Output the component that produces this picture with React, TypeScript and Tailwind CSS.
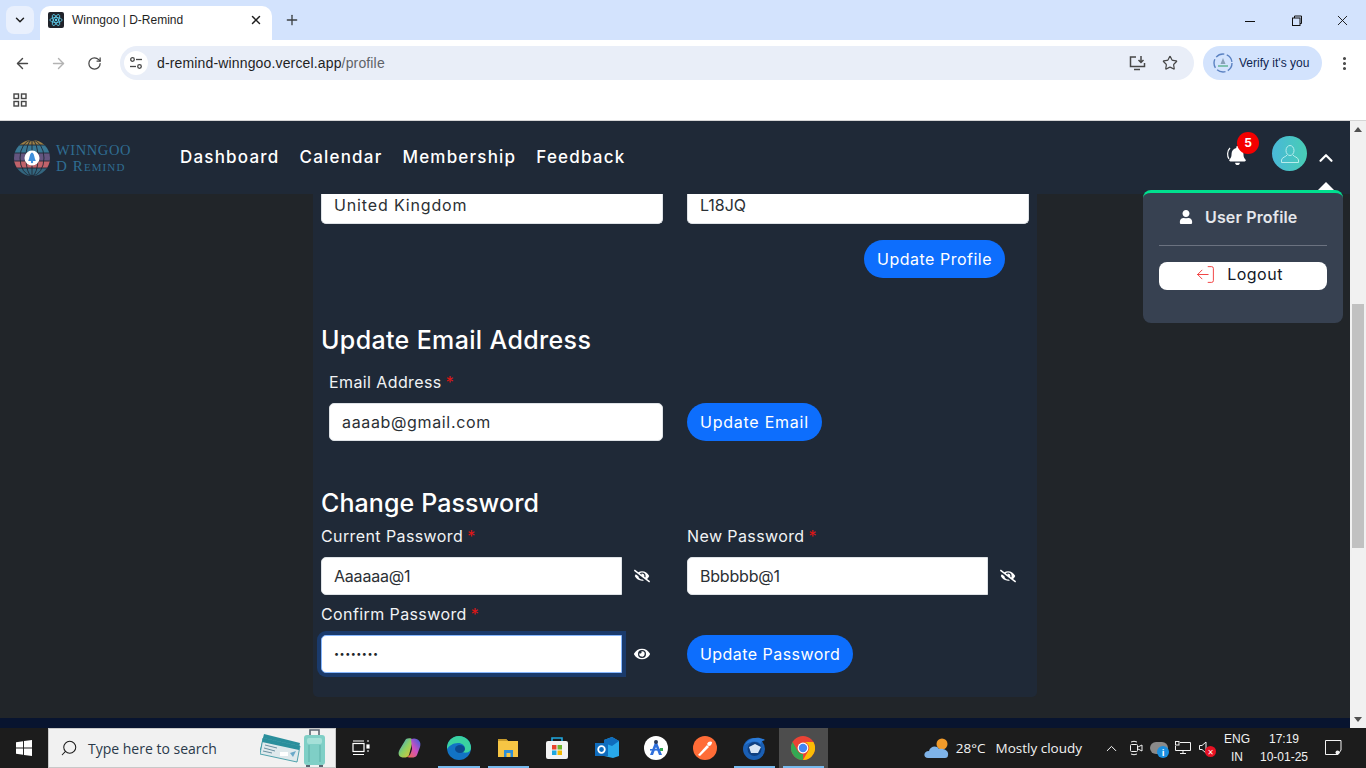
import { ArrowLeft, ArrowRight, ChevronDown, ChevronUp, LogOut, MoreVertical, Plus, RotateCw, Search, Star, X } from "lucide-react";
import type { ReactNode } from "react";
import { FaBell, FaEye, FaEyeSlash, FaUser } from "react-icons/fa";

const MONT = "font-['Inter','Open_Sans',sans-serif]";

function Req() {
  return <span className="ml-1 text-[#e01515]">*</span>;
}

function FieldLabel({ text, className = "" }: { text: string; className?: string }) {
  return (
    <div className={`text-[16px] leading-[20px] tracking-[0.4px] text-[#f1f3f5] ${className}`}>
      {text}
      <Req />
    </div>
  );
}

function TextBox({ value, className = "" }: { value: string; className?: string }) {
  return (
    <div className={`flex items-center rounded-[5px] border border-[#dee2e6] bg-white px-3 text-[16px] text-[#2b3035] ${className}`}>
      {value}
    </div>
  );
}

function BlueButton({ text, className = "" }: { text: string; className?: string }) {
  return (
    <div className={`flex h-[38px] items-center rounded-full bg-[#0d6efd] px-[13px] text-[16px] text-white ${className}`}>{text}</div>
  );
}

function PasswordField({ value, hidden }: { value: string; hidden: boolean }) {
  return (
    <div className="flex items-center">
      <div className="flex h-[38px] w-[301px] items-center rounded-l-[5px] border border-[#dee2e6] bg-white px-3 text-[16px] tracking-[-0.2px] text-[#2b3035]">
        {value}
      </div>
      <span className="ml-[12px] text-white">
        {hidden ? <FaEyeSlash size={16} /> : <FaEye size={16} />}
      </span>
    </div>
  );
}

function LogoGlobe() {
  return (
    <svg width="36" height="36" viewBox="0 0 36 36">
      <defs>
        <clipPath id="globeClip">
          <circle cx="18" cy="18" r="18" />
        </clipPath>
      </defs>
      <g clipPath="url(#globeClip)">
        <rect width="36" height="5" fill="#9c7f45" />
        <rect y="5" width="36" height="8" fill="#3a7894" />
        <rect y="13" width="36" height="8" fill="#64557f" />
        <rect y="21" width="36" height="7" fill="#c0636b" />
        <rect y="28" width="36" height="8" fill="#33667f" />
        <g fill="none" stroke="#1f2937" strokeWidth="0.9">
          <path d="M0 5 H36 M0 13 H36 M0 21 H36 M0 28 H36" />
          <ellipse cx="18" cy="18" rx="6" ry="18" />
          <ellipse cx="18" cy="18" rx="12" ry="18" />
          <path d="M18 0 V36" />
        </g>
      </g>
      <circle cx="18" cy="18" r="7.5" fill="#ffffff" />
      <path d="M18 12.5 C15.5 13.5 16 17 14.2 21 L21.8 21 C20 17 20.5 13.5 18 12.5 Z" fill="#3f8fdc" />
      <circle cx="18" cy="22" r="1.2" fill="#3f8fdc" />
    </svg>
  );
}

function ReactFavicon() {
  return (
    <div className="flex h-4 w-4 items-center justify-center rounded-[2px] bg-[#20232a]">
      <svg width="14" height="14" viewBox="-12 -12 24 24" fill="none" stroke="#61dafb" strokeWidth="1.3">
        <circle r="2" fill="#61dafb" stroke="none" />
        <ellipse rx="10.5" ry="4.2" />
        <ellipse rx="10.5" ry="4.2" transform="rotate(60)" />
        <ellipse rx="10.5" ry="4.2" transform="rotate(120)" />
      </svg>
    </div>
  );
}

function BrowserChrome() {
  return (
    <div className="h-[121px] shrink-0 border-b border-[#d5d5d5] bg-white font-['Open_Sans',sans-serif]">
      <div className="flex h-[40px] items-start bg-[#d3e3fd]">
        <div className="ml-[6px] mt-[6px] flex h-[28px] w-[28px] items-center justify-center rounded-[8px] bg-[#e9f0fd]">
          <ChevronDown size={14} strokeWidth={2.5} className="text-[#1f1f1f]" />
        </div>
        <div className="ml-[6px] mt-[6px] flex h-[34px] w-[232px] items-center rounded-t-[10px] bg-white pb-[6px] pl-[8px] pr-[9px]">
          <ReactFavicon />
          <span className="ml-2 font-['Liberation_Sans',sans-serif] text-[12px] text-[#1f1f1f]">Winngoo | D-Remind</span>
          <X size={14} strokeWidth={2.5} className="ml-auto text-[#1f1f1f]" />
        </div>
        <Plus size={16} strokeWidth={2} className="ml-[12px] mt-[12px] text-[#3c4043]" />
        <div className="ml-auto flex items-center pt-[12px] text-[#111111]">
          <svg width="10" height="16" viewBox="0 0 10 16" stroke="currentColor" strokeWidth="1">
            <path d="M0 8.5 H10" />
          </svg>
          <svg width="12" height="12" viewBox="0 0 12 12" fill="none" stroke="currentColor" className="ml-[36px]">
            <rect x="1.5" y="3" width="7.5" height="7.5" />
            <path d="M3.5 3 V1 H10.5 V8.5 H9" />
          </svg>
          <X size={17} strokeWidth={1.3} className="ml-[31px] mr-[15px]" />
        </div>
      </div>
      <div className="flex h-[46px] items-center">
        <ArrowLeft size={17} strokeWidth={2} className="ml-[14px] text-[#474747]" />
        <ArrowRight size={17} strokeWidth={2} className="ml-[19px] text-[#b3b3b3]" />
        <RotateCw size={15} strokeWidth={2} className="ml-[20px] text-[#474747]" />
        <div className="ml-[18px] flex h-[34px] w-[1074px] items-center rounded-full bg-[#e9eef8] pl-[4px]">
          <div className="flex h-[24px] w-[24px] items-center justify-center rounded-full bg-white">
            <svg width="14" height="14" viewBox="0 0 14 14" fill="none" stroke="#474747" strokeWidth="1.3">
              <circle cx="3.5" cy="3.5" r="1.8" />
              <path d="M7 3.5 H13" />
              <circle cx="10.5" cy="10.5" r="1.8" />
              <path d="M1 10.5 H7" />
            </svg>
          </div>
          <span className="ml-[9px] font-['Liberation_Sans',sans-serif] text-[14px] tracking-[0.15px] text-[#1f1f1f]">
            d-remind-winngoo.vercel.app<span className="text-[#5f6368]">/profile</span>
          </span>
          <svg width="17" height="16" viewBox="0 0 17 16" fill="none" stroke="#474747" strokeWidth="1.5" className="ml-auto">
            <path d="M7 2 H1.5 V11.5 H15.5 V8" />
            <path d="M5 14.5 H11" />
            <path d="M12 1 V7 M9.5 5 L12 7.5 L14.5 5" />
          </svg>
          <Star size={16} strokeWidth={1.8} className="ml-[16px] mr-[16px] text-[#474747]" />
        </div>
        <div className="ml-[9px] flex h-[34px] w-[119px] items-center rounded-full bg-[#d3e3fd] pl-[10px]">
          <svg width="20" height="20" viewBox="0 0 20 20" fill="none">
            <circle cx="10" cy="10" r="9" stroke="#5b82c2" strokeWidth="1.4" strokeDasharray="9 2.5" />
            <path d="M10 5 L12.5 11 H7.5 Z" fill="#8aa0b8" />
            <rect x="5" y="12" width="10" height="2" fill="#7fc0b0" />
          </svg>
          <span className="ml-[6px] font-['Liberation_Sans',sans-serif] text-[12px] text-[#0f2550]">Verify it's you</span>
        </div>
        <MoreVertical size={17} strokeWidth={2.4} className="ml-[14px] text-[#474747]" />
      </div>
      <div className="flex h-[34px] items-start pl-[13px] pt-[7px]">
        <svg width="14" height="14" viewBox="0 0 14 14" fill="none" stroke="#474747" strokeWidth="1.4">
          <rect x="1" y="1" width="4.5" height="4.5" />
          <rect x="8.5" y="1" width="4.5" height="4.5" />
          <rect x="1" y="8.5" width="4.5" height="4.5" />
          <rect x="8.5" y="8.5" width="4.5" height="4.5" />
        </svg>
      </div>
    </div>
  );
}

function NavBar() {
  return (
    <div className="flex h-[73px] shrink-0 items-center bg-[#1f2937]">
      <div className="ml-[14px] flex items-center">
        <LogoGlobe />
        <div className="ml-[6px] w-[76px] font-['Liberation_Serif',serif] text-[#2f6d92]">
          <div className="text-[14.5px] leading-[16px] tracking-[0.6px]">WINNGOO</div>
          <div className="text-[15px] leading-[16px] tracking-[1.1px] [font-variant:small-caps]">D Remind</div>
        </div>
      </div>
      <div className="ml-[48px] flex gap-[20px] text-[17px] font-medium tracking-[1.2px] text-white">
        <span>Dashboard</span>
        <span>Calendar</span>
        <span>Membership</span>
        <span>Feedback</span>
      </div>
      <div className="relative ml-auto flex items-center pr-[13px]">
        <div className="relative mb-[4px] mr-[25px]">
          <FaBell size={19} className="text-white" />
          <svg width="6" height="14" viewBox="0 0 6 14" fill="none" stroke="#ffffff" strokeWidth="1.2" className="absolute -left-[2px] top-[1px]">
            <path d="M4 1 C1 4 1 9 3 12" />
          </svg>
          <span className="absolute -right-[12px] -top-[14px] flex h-[22px] w-[22px] items-center justify-center rounded-full bg-[#f50000] text-[12px] font-bold text-white">
            5
          </span>
        </div>
        <div className="mb-[8px] flex h-[35px] w-[35px] items-center justify-center rounded-full bg-gradient-to-r from-[#4ab8d8] to-[#48cdb4]">
          <svg width="20" height="20" viewBox="0 0 20 20" fill="none" stroke="#b8ecec" strokeWidth="1">
            <ellipse cx="10" cy="6.5" rx="4" ry="5" />
            <path d="M7 11 C6 13 2 13 1.5 16 V18.5 H18.5 V16 C18 13 14 13 13 11" />
          </svg>
        </div>
        <ChevronUp size={22} strokeWidth={2.4} className="ml-[8px] text-white" />
      </div>
    </div>
  );
}

function UserMenu() {
  return (
    <div className="absolute left-[1143px] top-[69px] h-[133px] w-[200px] rounded-[8px] border-t-[3px] border-[#00e08f] bg-[#374151]">
      <div className="absolute -top-[11px] left-[175px] h-0 w-0 border-x-[8px] border-b-[8px] border-x-transparent border-b-white" />
      <div className="flex h-[48px] items-center pl-[36px] text-[#e5e7eb]">
        <FaUser size={14} className="text-white" />
        <span className="ml-[12px] text-[16px] font-semibold tracking-[0.15px]">User Profile</span>
      </div>
      <div className="mx-[16px] mt-[4px] border-t border-[#6b7280]" />
      <div className="mx-[16px] mt-[16px] flex h-[28px] items-center justify-center rounded-[8px] bg-white pb-[4px] pr-[8px] text-[#111827]">
        <LogOut size={21} strokeWidth={1} className="rotate-180 text-[#ef2b2b]" />
        <span className="ml-[11px] text-[16px] tracking-[0.5px]">Logout</span>
      </div>
    </div>
  );
}

function ProfileCard() {
  return (
    <div className="ml-[313px] h-[503px] w-[724px] rounded-b-[5px] bg-[#1f2937] pl-[8px] text-[#f1f3f5]">
      <div className="flex gap-[24px]">
        <TextBox value="United Kingdom" className="h-[30px] w-[342px] rounded-t-none border-t-0 pb-[8px] tracking-[0.85px]" />
        <TextBox value="L18JQ" className="h-[30px] w-[342px] rounded-t-none border-t-0 pb-[8px]" />
      </div>
      <div className="mt-[16px] flex justify-end pr-[32px]">
        <BlueButton text="Update Profile" className="tracking-[0.5px]" />
      </div>
      <h2 className="mt-[45px] text-[25px] font-medium leading-[34px] tracking-[0.35px] text-white">Update Email Address</h2>
      <div className="ml-[8px] mt-[15px]">
        <FieldLabel text="Email Address" />
        <div className="mt-[11px] flex items-center gap-[24px]">
          <TextBox value="aaaab@gmail.com" className="h-[38px] w-[334px] tracking-[0.65px]" />
          <BlueButton text="Update Email" className="tracking-[0.75px]" />
        </div>
      </div>
      <h2 className="mt-[45px] text-[25px] font-medium leading-[34px] tracking-[0.1px] text-white">Change Password</h2>
      <div className="mt-[6px] flex gap-[65px]">
        <div className="w-[301px] shrink-0">
          <FieldLabel text="Current Password" />
        </div>
        <FieldLabel text="New Password" />
      </div>
      <div className="mt-[11px] flex gap-[37px]">
        <PasswordField value="Aaaaaa@1" hidden />
        <PasswordField value="Bbbbbb@1" hidden />
      </div>
      <FieldLabel text="Confirm Password" className="mt-[9px]" />
      <div className="mt-[11px] flex items-center gap-[37px]">
        <div className="flex items-center">
          <div className="flex h-[38px] w-[301px] items-center rounded-l-[5px] border border-[#86b7fe] bg-white px-3 text-[9px] tracking-[0.5px] text-[#212529] shadow-[0_0_0_4px_#1a3a6b]">
            ••••••••
          </div>
          <span className="ml-[12px] text-white">
            <FaEye size={16} />
          </span>
        </div>
        <BlueButton text="Update Password" className="tracking-[0.45px]" />
      </div>
    </div>
  );
}

function Scrollbar() {
  return (
    <div className="flex w-[16px] shrink-0 flex-col bg-[#f1f1f1]">
      <div className="flex h-[17px] items-center justify-center">
        <div className="h-0 w-0 border-x-[4px] border-b-[5px] border-x-transparent border-b-[#505050]" />
      </div>
      <div className="ml-[2px] mt-[166px] h-[244px] w-[12px] bg-[#c1c1c1]" />
      <div className="mt-auto flex h-[17px] items-center justify-center">
        <div className="h-0 w-0 border-x-[4px] border-t-[5px] border-x-transparent border-t-[#505050]" />
      </div>
    </div>
  );
}

function AppIcon({ children, active = false, underline = false }: { children: ReactNode; active?: boolean; underline?: boolean }) {
  return (
    <div className={`relative flex h-[40px] w-[49.2px] items-center justify-center ${active ? "bg-[#4d4d4d]" : ""}`}>
      {children}
      {underline && <div className="absolute bottom-0 left-[4px] right-[4px] h-[2px] bg-[#76b9ed]" />}
    </div>
  );
}

function Taskbar() {
  return (
    <div className="flex h-[40px] shrink-0 items-center bg-[#1c1c1c] font-['Open_Sans',sans-serif] text-white">
      <div className="flex w-[48px] justify-center">
        <svg width="16" height="16" viewBox="0 0 17 17" fill="#ffffff">
          <path d="M0 2.5 L7.5 1.3 V8 H0 Z" />
          <path d="M8.5 1.1 L17 0 V8 H8.5 Z" />
          <path d="M0 9 H7.5 V15.7 L0 14.5 Z" />
          <path d="M8.5 9 H17 V17 L8.5 15.9 Z" />
        </svg>
      </div>
      <div className="flex h-[40px] w-[288px] items-center border border-[#c8c8c8] bg-[#f1f1f1] pl-[11px] pr-[9px]">
        <Search size={18} strokeWidth={1.4} className="-scale-x-100 text-[#1c1c1c]" />
        <span className="ml-[10px] text-[14px] text-[#2a3a4a]">Type here to search</span>
        <svg width="66" height="38" viewBox="0 0 66 38" className="ml-auto">
          <path d="M4 5 L40 14 L36 30 L0 21 Z" fill="#2a8f9c" />
          <path d="M3 9 L40 17 L37 33 L0 25 Z" fill="#dfe9ec" stroke="#2a8f9c" strokeWidth="0.8" />
          <path d="M3 9 L40 17 L39 21 L2 13 Z" fill="#2a8f9c" />
          <path d="M5 16 L17 19 M4 19 L15 22 M3 22 L12 24" stroke="#6a8fa0" strokeWidth="1" />
          <rect x="20" y="23" width="8" height="4" fill="#ffffff" />
          <path d="M30 24 L36 22 L33 28 Z" fill="#6aa8c8" />
          <path d="M50 6 V1 H59 V6" fill="none" stroke="#5b6470" strokeWidth="1.6" />
          <rect x="44" y="6" width="21" height="30" rx="3" fill="#7fcfc6" />
          <rect x="47" y="9" width="15" height="6" rx="2" fill="#a5e0d8" />
          <path d="M49 16 V33 M60 16 V33" stroke="#5fb0a8" strokeWidth="1" />
          <rect x="46" y="36" width="4" height="2" fill="#5b6470" />
          <rect x="59" y="36" width="4" height="2" fill="#5b6470" />
        </svg>
      </div>
      <div className="flex items-center">
        <AppIcon>
          <svg width="18" height="16" viewBox="0 0 18 16" fill="none" stroke="#ffffff" strokeWidth="1.2">
            <rect x="1" y="3.5" width="11" height="8" />
            <path d="M1 1 H12 M1 14.5 H12" />
            <rect x="15" y="5" width="2" height="3" fill="#ffffff" />
            <path d="M15 1 H17 M15 11 H17" />
          </svg>
        </AppIcon>
        <AppIcon>
          <svg width="24" height="24" viewBox="0 0 24 24">
            <defs>
              <linearGradient id="cop" x1="0" y1="0" x2="1" y2="1">
                <stop offset="0" stopColor="#2f9be8" />
                <stop offset="0.5" stopColor="#8ed060" />
                <stop offset="1" stopColor="#f0c030" />
              </linearGradient>
              <linearGradient id="cop2" x1="1" y1="0" x2="0" y2="1">
                <stop offset="0" stopColor="#3060e0" />
                <stop offset="0.5" stopColor="#d050c0" />
                <stop offset="1" stopColor="#f07040" />
              </linearGradient>
            </defs>
            <path d="M8 3 C10 2 14 2 15 4 L11 19 C10 22 5 22 3 21 C0 20 0 16 2 13 Z" fill="url(#cop)" />
            <path d="M13 3 C19 1 24 5 22 11 L19 19 C18 22 13 22 9 21 C12 20 13 17 14 13 Z" fill="url(#cop2)" />
          </svg>
        </AppIcon>
        <AppIcon underline>
          <svg width="24" height="24" viewBox="0 0 24 24">
            <circle cx="12" cy="12" r="12" fill="#1273c4" />
            <path d="M12 0 A12 12 0 0 1 24 12 C24 17 17 18 14 15 C20 14 18 7 11 7 C6 7 2 10 0 13 A12 12 0 0 1 12 0 Z" fill="#3ad2a0" />
            <ellipse cx="13" cy="13" rx="5" ry="4" fill="#0b4a8f" />
          </svg>
        </AppIcon>
        <AppIcon underline>
          <svg width="22" height="20" viewBox="0 0 22 20">
            <path d="M1 1 H9 L11 3 H21 V19 H1 Z" fill="#f6c544" />
            <path d="M1 1 H9 L11 3 H1 Z" fill="#c79a2a" />
            <rect x="7" y="12" width="9" height="7" fill="#2d8fd8" />
            <rect x="9.5" y="15" width="4" height="4" fill="#f6c544" />
          </svg>
        </AppIcon>
        <AppIcon>
          <svg width="24" height="24" viewBox="0 0 24 24">
            <path d="M7 6 V2 H17 V6" fill="none" stroke="#1fa8e0" strokeWidth="1.6" />
            <rect x="1" y="5" width="22" height="18" rx="2" fill="#f3f3f3" />
            <rect x="7" y="9" width="4.5" height="4.5" fill="#e8452c" />
            <rect x="12.5" y="9" width="4.5" height="4.5" fill="#6db52d" />
            <rect x="7" y="14.5" width="4.5" height="4.5" fill="#1fa8e0" />
            <rect x="12.5" y="14.5" width="4.5" height="4.5" fill="#f6b900" />
          </svg>
        </AppIcon>
        <AppIcon>
          <svg width="24" height="24" viewBox="0 0 24 24">
            <path d="M9 4 L17 1 L24 5 V20 L18 22 L9 20 Z" fill="#28a8ea" />
            <path d="M9 4 L17 1 L24 5 L17 10 L9 7 Z" fill="#0f6cbd" />
            <rect x="0" y="7" width="13" height="13" fill="#0f6cbd" />
            <circle cx="6.5" cy="13.5" r="3.3" fill="none" stroke="#ffffff" strokeWidth="1.8" />
          </svg>
        </AppIcon>
        <AppIcon>
          <svg width="24" height="24" viewBox="0 0 24 24">
            <circle cx="12" cy="12" r="12" fill="#ffffff" />
            <path d="M12 4 L18 19 H15 L12 11 L9 19 H6 Z" fill="#2f6fdc" />
            <circle cx="12" cy="6" r="2" fill="#2a3a5a" />
            <rect x="6" y="13" width="12" height="1.6" fill="#2f6fdc" />
            <rect x="16" y="12" width="3" height="3" fill="#34a853" />
          </svg>
        </AppIcon>
        <AppIcon>
          <svg width="24" height="24" viewBox="0 0 24 24">
            <circle cx="12" cy="12" r="12" fill="#ff6c37" />
            <path d="M5 19 L14 9 L16 11 L7 20 Z" fill="#ffffff" />
            <path d="M14 8 C15 5 18 5 19 6 C19 8 18 10 15.5 10 Z" fill="#ffffff" />
          </svg>
        </AppIcon>
        <AppIcon underline>
          <svg width="24" height="24" viewBox="0 0 24 24">
            <circle cx="12" cy="13" r="11" fill="#1a5fb4" />
            <path d="M3 9 C5 3 15 -1 23 4 C20 5 19 6 19 8 C15 4 8 5 3 9 Z" fill="#2a7ad8" />
            <circle cx="12.5" cy="13" r="7" fill="#0f3f80" />
            <path d="M7 11 L13 8 L19 11 L16 17 L9 17 Z" fill="#d6e4f5" />
          </svg>
        </AppIcon>
        <AppIcon active underline>
          <svg width="24" height="24" viewBox="0 0 24 24">
            <circle cx="12" cy="12" r="12" fill="#ea4335" />
            <path d="M12 24 A12 12 0 0 1 1.6 6 L7 15.5 A6 6 0 0 0 12 18 Z" fill="#34a853" />
            <path d="M12 24 A12 12 0 0 0 22.4 6 H12 A6 6 0 0 1 17 15.5 Z" fill="#fbbc05" />
            <circle cx="12" cy="12" r="5.4" fill="#ffffff" />
            <circle cx="12" cy="12" r="4.2" fill="#4285f4" />
          </svg>
        </AppIcon>
      </div>
      <div className="ml-auto flex items-center">
        <svg width="26" height="22" viewBox="0 0 26 22">
          <circle cx="18" cy="7" r="5.5" fill="#f09a2a" />
          <path d="M4 21 C-1 21 -1 14 5 14 C6 9 13 8 15 12 C20 11 25 14 24 18 C24 20 23 21 21 21 Z" fill="#7fb3e8" />
        </svg>
        <span className="ml-[6px] text-[13.5px] text-[#f2f2f2]">28°C</span>
        <span className="ml-[10px] text-[13.5px] text-[#f2f2f2]">Mostly cloudy</span>
        <ChevronUp size={17} strokeWidth={1.4} className="ml-[21px]" />
        <svg width="14" height="16" viewBox="0 0 14 16" fill="none" stroke="#f2f2f2" className="ml-[9px]">
          <rect x="1.5" y="4.5" width="7" height="7" rx="1" />
          <path d="M9 7 L13 5 V11 L9 9" />
          <path d="M2 2 Q5 0.5 8 2 M2 14 Q5 15.5 8 14" />
        </svg>
        <div className="relative ml-[7px] h-[12px] w-[18px] rounded-full bg-[#8a8a8a]">
          <span className="absolute -bottom-[4px] -right-[1px] flex h-[12px] w-[12px] items-center justify-center rounded-full bg-[#1a8fe0] text-[9px] font-bold leading-none">i</span>
        </div>
        <svg width="16" height="14" viewBox="0 0 16 14" fill="none" stroke="#f2f2f2" className="ml-[7px]">
          <path d="M5 1.5 H15.5 V9.5 H0.5 V5" />
          <rect x="0.5" y="0.5" width="3.5" height="3.5" />
          <path d="M8 9.5 V12.5 M5 12.5 H11" />
        </svg>
        <div className="relative ml-[8px] h-[14px] w-[16px]">
          <svg width="10" height="13" viewBox="0 0 10 13" fill="none" stroke="#f2f2f2">
            <path d="M0.5 4.5 H3 L7 1 V12 L3 8.5 H0.5 Z" />
          </svg>
          <span className="absolute -bottom-[2px] -right-[1px] flex h-[11px] w-[11px] items-center justify-center rounded-full bg-[#e81123] text-[10px] leading-none">×</span>
        </div>
        <div className="ml-[10px] flex w-[24px] flex-col items-center font-['Liberation_Sans',sans-serif] text-[12px] leading-[18px] text-[#f2f2f2]">
          <span>ENG</span>
          <span>IN</span>
        </div>
        <div className="ml-[9px] flex w-[52px] flex-col items-center font-['Liberation_Sans',sans-serif] text-[12px] leading-[18px] text-[#f2f2f2]">
          <span>17:19</span>
          <span>10-01-25</span>
        </div>
        <svg width="17" height="16" viewBox="0 0 17 16" fill="none" stroke="#f2f2f2" className="ml-[15px] mr-[24px]">
          <path d="M0.5 0.5 H16 V10 L13 14.5 H0.5 Z" />
          <circle cx="12.5" cy="12.5" r="2" fill="#f2f2f2" stroke="none" />
        </svg>
      </div>
    </div>
  );
}

export default function App() {
  return (
    <div className="flex h-[768px] w-[1366px] flex-col overflow-hidden bg-[#212529]">
      <BrowserChrome />
      <div className="relative flex min-h-0 flex-1">
        <div className={`relative flex min-w-0 flex-1 flex-col ${MONT}`}>
          <NavBar />
          <ProfileCard />
          <div className="mt-auto h-[10px] bg-[#08142f]" />
          <UserMenu />
        </div>
        <Scrollbar />
      </div>
      <Taskbar />
    </div>
  );
}
